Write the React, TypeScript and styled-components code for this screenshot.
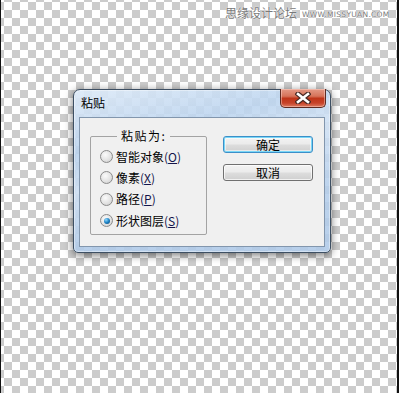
import styled, { createGlobalStyle } from "styled-components";

const GlobalStyle = createGlobalStyle`
  html, body {
    margin: 0;
    padding: 0;
  }
  body {
    font-family: "Noto Sans CJK SC", "Liberation Sans", sans-serif;
    font-size: 12px;
    color: #000;
  }
`;

const options = [
  { label: "智能对象", key: "O", checked: false },
  { label: "像素", key: "X", checked: false },
  { label: "路径", key: "P", checked: false },
  { label: "形状图层", key: "S", checked: true },
];

const App = () => {
  return (
    <>
      <GlobalStyle />
      <Stage>
        <Watermark>
          <WatermarkCn>思缘设计论坛</WatermarkCn>
          <WatermarkUrl>WWW.MISSYUAN.COM</WatermarkUrl>
        </Watermark>
        <Window>
          <TitleBar>
            <Title>粘贴</Title>
            <CloseButton aria-label="关闭">
              <svg width="16" height="12" viewBox="0 0 16 12">
                <path
                  d="M3 2 L13 10 M13 2 L3 10"
                  stroke="#4a2a24"
                  strokeWidth="5"
                  strokeLinecap="square"
                />
                <path
                  d="M3 2 L13 10 M13 2 L3 10"
                  stroke="#fff"
                  strokeWidth="2.6"
                  strokeLinecap="square"
                />
              </svg>
            </CloseButton>
          </TitleBar>
          <Client>
            <Group>
              <Legend>粘贴为:</Legend>
              {options.map((o) => (
                <RadioRow key={o.key}>
                  <Radio $checked={o.checked} />
                  <RadioLabel>
                    {o.label}
                    <Key>
                      (<u>{o.key}</u>)
                    </Key>
                  </RadioLabel>
                </RadioRow>
              ))}
            </Group>
            <Buttons>
              <Button $default>确定</Button>
              <Button>取消</Button>
            </Buttons>
          </Client>
        </Window>
      </Stage>
    </>
  );
};
export default App;

const Stage = styled.div`
  position: relative;
  width: 399px;
  height: 393px;
  box-sizing: border-box;
  padding: 89px 0 0 72px;
  border-left: 1px solid #111;
  border-right: 2px solid #111;
  background-color: #fff;
  background-image: conic-gradient(
    #cccccc 25%,
    #ffffff 0 50%,
    #cccccc 0 75%,
    #ffffff 0
  );
  background-size: 16px 16px;
  background-position: -5px -6px;
`;

const Watermark = styled.div`
  position: absolute;
  top: 6px;
  left: 224px;
  display: flex;
  align-items: flex-end;
  gap: 5px;
  color: #7a7a7a;
  text-shadow: 0 0 1px #fff, 0 0 1px #fff;
`;

const WatermarkCn = styled.span`
  font-size: 12px;
  line-height: 14px;
`;

const WatermarkUrl = styled.span`
  font-family: "DejaVu Sans", sans-serif;
  font-size: 7.5px;
  line-height: 11px;
  letter-spacing: 0.3px;
`;

const Window = styled.div`
  width: 258px;
  height: 164px;
  box-sizing: border-box;
  padding: 0 5px 5px;
  border: 1px solid #3d4f63;
  border-radius: 7px 7px 5px 5px;
  background: linear-gradient(
      165deg,
      rgba(255, 255, 255, 0.45) 0%,
      rgba(255, 255, 255, 0) 28%,
      rgba(255, 255, 255, 0.3) 45%,
      rgba(255, 255, 255, 0) 70%
    ),
    linear-gradient(rgba(190, 214, 240, 0.88), rgba(176, 202, 232, 0.9));
  box-shadow: 0 0 0 1px rgba(255, 255, 255, 0.4) inset, 0 2px 9px rgba(0, 0, 0, 0.55);
  display: flex;
  flex-direction: column;
`;

const TitleBar = styled.div`
  height: 27px;
  display: flex;
  align-items: flex-start;
  justify-content: space-between;
`;

const Title = styled.span`
  padding: 6px 0 0 2px;
  font-size: 12px;
  line-height: 14px;
  color: #000;
`;

const CloseButton = styled.button`
  width: 46px;
  height: 19px;
  margin: -1px -1px 0 0;
  padding: 0;
  display: flex;
  align-items: center;
  justify-content: center;
  border: 1px solid #5e2b22;
  border-top: none;
  border-radius: 0 0 5px 5px;
  background: linear-gradient(
    #e49a86 0%,
    #d6735a 40%,
    #bf3519 52%,
    #c7432a 78%,
    #dc7c62 100%
  );
  box-shadow: 0 0 0 1px rgba(255, 220, 210, 0.45) inset;
`;

const Client = styled.div`
  height: 130px;
  box-sizing: border-box;
  border: 1px solid #8296ad;
  background: #f0f0f0;
  display: flex;
  align-items: flex-start;
  gap: 16px;
  padding: 12px 0 0 10px;
`;

const Group = styled.fieldset`
  width: 117px;
  box-sizing: border-box;
  margin: 0;
  padding: 4px 0 3px 9px;
  border: 1px solid #a3a3a3;
  border-radius: 2px;
  display: flex;
  flex-direction: column;
`;

const Legend = styled.legend`
  margin-left: 17px;
  padding: 0 4px;
  font-size: 12px;
  line-height: 12px;
  letter-spacing: 1.5px;
`;

const RadioRow = styled.label`
  height: 21.3px;
  display: flex;
  align-items: center;
  gap: 3px;
`;

const Radio = styled.span<{ $checked?: boolean }>`
  position: relative;
  width: 11px;
  height: 11px;
  flex: none;
  border-radius: 50%;
  border: 1px solid #8b8b8b;
  background: radial-gradient(circle at 40% 35%, #fbfbfb 0%, #e3e3e3 55%, #c9c9c9 100%);

  &::after {
    content: "";
    position: absolute;
    left: 2.5px;
    top: 2.5px;
    width: 6px;
    height: 6px;
    border-radius: 50%;
    display: ${({ $checked }) => ($checked ? "block" : "none")};
    background: radial-gradient(circle at 35% 30%, #8fd8ff 0%, #1d82c4 50%, #0a3f70 100%);
  }
`;

const RadioLabel = styled.span`
  font-size: 12px;
  line-height: 14px;
  white-space: nowrap;
`;

const Key = styled.span`
  color: #14144a;
`;

const Buttons = styled.div`
  margin-top: 6px;
  display: flex;
  flex-direction: column;
  gap: 11px;
`;

const Button = styled.button<{ $default?: boolean }>`
  width: 90px;
  height: 17px;
  padding: 0;
  font-family: "Noto Sans CJK SC", sans-serif;
  font-size: 12px;
  line-height: 13px;
  color: #000;
  border-radius: 3px;
  border: 1px solid ${({ $default }) => ($default ? "#3c8fc8" : "#707070")};
  background: linear-gradient(#f3f3f3 0%, #ebebeb 48%, #dddddd 52%, #cfcfcf 100%);
  box-shadow: ${({ $default }) =>
    $default
      ? "0 0 0 1px #7ad7f7 inset, 0 0 0 2px rgba(255,255,255,0.5) inset"
      : "0 0 0 1px rgba(255,255,255,0.7) inset"};
`;
